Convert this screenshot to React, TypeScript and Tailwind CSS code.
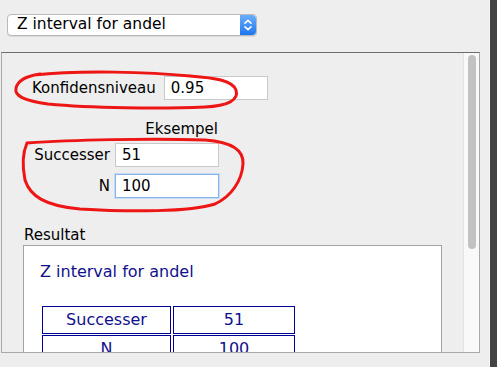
import React from "react";

const font = { fontFamily: '"DejaVu Sans", Verdana, sans-serif' };

const Stepper = () => (
  <div className="w-[16px] h-full rounded-r-[4px] bg-gradient-to-b from-[#6aaefc] to-[#1a76f0] flex items-center justify-center">
    <svg width="10" height="14" viewBox="0 0 10 14" fill="none" stroke="white" strokeWidth="1.6" strokeLinecap="round" strokeLinejoin="round">
      <path d="M2 5.2 L5 2.4 L8 5.2" />
      <path d="M2 8.8 L5 11.6 L8 8.8" />
    </svg>
  </div>
);

const Field = ({ value, focused, className }: { value: string; focused?: boolean; className: string }) => (
  <div
    className={
      "h-[24px] bg-white flex items-center px-[6px] text-[15px] text-black " +
      (focused ? "border border-[#86b3ea] shadow-[0_0_0_1px_#c6dbf5]" : "border border-[#c9c9c9]") +
      " " +
      className
    }
  >
    {value}
  </div>
);

const Cell = ({ children }: { children: React.ReactNode }) => (
  <div className="h-[28px] border border-[#000094] flex items-center justify-center text-[16px] text-[#10108c]">{children}</div>
);

export default function App() {
  return (
    <div className="relative w-[497px] h-[367px] bg-[#eeeeee] flex overflow-hidden" style={font}>
      <div className="flex-1 flex flex-col pl-[1px] border-r border-[#f6f6f6]">
        {/* DROPDOWN */}
        <div className="mt-[14px] ml-[6px] w-[250px] h-[22px] flex rounded-[4px] border border-[#b9b9b9] bg-white shadow-[0_1px_0_#dcdcdc]">
          <div className="flex-1 flex items-center pl-[9px] text-[15.5px] text-black leading-none">Z interval for andel</div>
          <Stepper />
        </div>

        {/* PANEL */}
        <div className="mt-[16px] w-[479px] h-[301px] flex border border-[#a9a9a9] border-t-[#6d6d6d] overflow-hidden">
          <div className="flex-1 flex flex-col text-[15px] text-black">
            <div className="mt-[23px] ml-[30px] h-[24px] flex items-center">
              <span>Konfidensniveau</span>
              <Field value="0.95" className="ml-[8px] w-[104px]" />
            </div>

            <div className="mt-[20px] w-[216px] h-[18px] leading-[18px] text-right">Eksempel</div>

            <div className="mt-[5px] grid grid-cols-[108px_104px] gap-x-[5px] gap-y-[7px] items-center">
              <span className="text-right">Successer</span>
              <Field value="51" className="w-[104px]" />
              <span className="text-right">N</span>
              <Field value="100" focused className="w-[104px]" />
            </div>

            <div className="mt-[28px] ml-[22px] h-[18px] leading-[18px]">Resultat</div>

            <div className="mt-[1px] ml-[21px] w-[419px] flex-1 bg-white border border-[#a3a3a3] border-b-0 flex flex-col">
              <div className="mt-[16px] ml-[16px] h-[20px] leading-[20px] text-[16px] text-[#10108c]">Z interval for andel</div>
              <div className="mt-[24px] ml-[18px] grid grid-cols-[129px_122px] gap-x-[2px] gap-y-[1px]">
                <Cell>Successer</Cell>
                <Cell>51</Cell>
                <Cell>N</Cell>
                <Cell>100</Cell>
              </div>
            </div>
          </div>

          {/* SCROLLBAR */}
          <div className="w-[16px] bg-[#f9f9f9] border-l border-[#e3e3e3] flex justify-center pt-[2px]">
            <div className="w-[8px] h-[194px] rounded-full bg-[#c2c2c2]" />
          </div>
        </div>
      </div>
      <div className="w-[7px] bg-[#444444]" />

      {/* RED ANNOTATIONS */}
      <svg className="absolute inset-0 pointer-events-none" width="497" height="367" fill="none" stroke="#ee1515" strokeWidth="3" strokeLinecap="round" strokeLinejoin="round">
        <path d="M34 75 C80 70 150 72 190 76 C215 78 232 80 236 90 C239 100 228 106 205 107 C160 109 90 108 48 104 C25 101 14 96 16 88 C18 80 26 76 40 74" />
        <path d="M27 143 C70 140 150 138 205 140 C232 142 244 150 243 164 C242 180 232 196 215 204 C190 212 130 212 80 209 C45 206 30 196 25 180 C22 165 23 152 27 143" />
      </svg>
    </div>
  );
}
